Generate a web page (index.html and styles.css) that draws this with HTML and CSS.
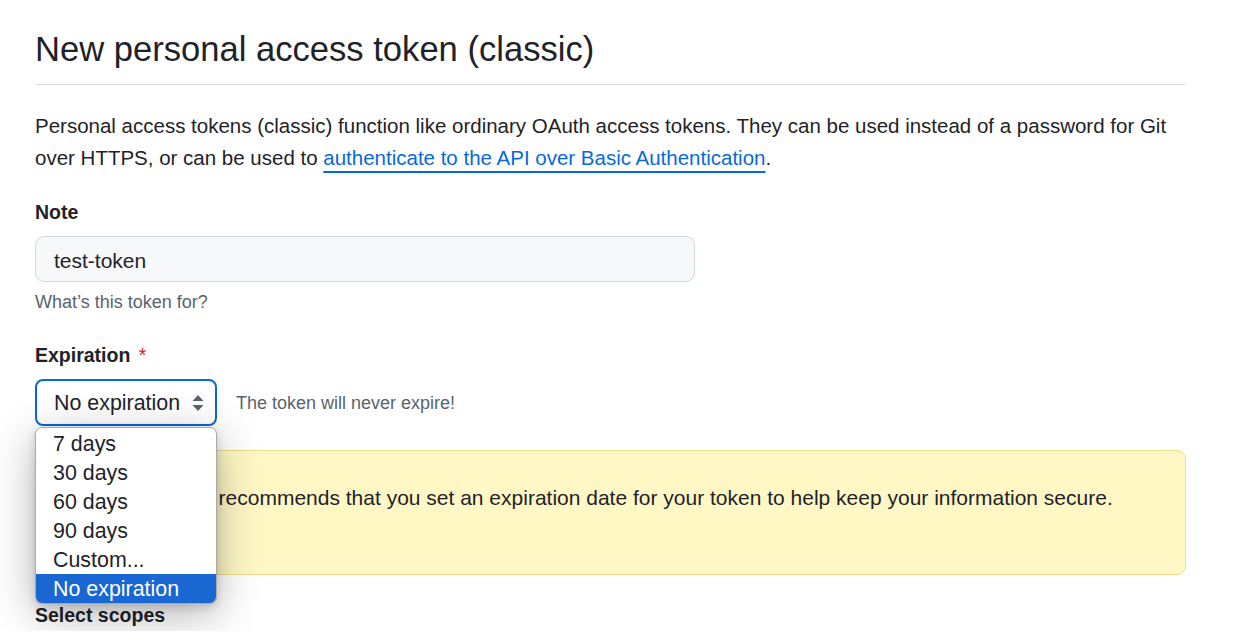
FILE: index.html
```html
<!DOCTYPE html>
<html lang="en">
<head>
<meta charset="utf-8">
<title>New personal access token (classic)</title>
<link rel="stylesheet" href="styles.css">
</head>
<body>
<main class="page">
  <div class="subhead">
    <h2 class="subhead-heading">New personal access token (classic)</h2>
  </div>
  <p class="intro">Personal access tokens (classic) function like ordinary OAuth access tokens. They can be used instead of a password for Git over HTTPS, or can be used to <a class="link" href="#">authenticate to the API over Basic Authentication</a>.</p>

  <div class="form-group">
    <label class="label">Note</label>
    <div class="input">test-token</div>
    <p class="note">What’s this token for?</p>
  </div>

  <div class="form-group expiration">
    <label class="label">Expiration <span class="req">*</span></label>
    <div class="select-row">
      <div class="select-wrap">
        <div class="select">
          <span>No expiration</span>
          <svg class="select-arrows" width="12" height="18" viewBox="0 0 12 18" aria-hidden="true">
            <path d="M6 1 L11.5 7 L0.5 7 Z" fill="#59636e"/>
            <path d="M6 17 L11.5 11 L0.5 11 Z" fill="#59636e"/>
          </svg>
        </div>
        <ul class="dropdown">
          <li>7 days</li>
          <li>30 days</li>
          <li>60 days</li>
          <li>90 days</li>
          <li>Custom...</li>
          <li class="selected">No expiration</li>
        </ul>
      </div>
      <span class="select-hint">The token will never expire!</span>
    </div>
  </div>

  <div class="flash-warn">
    <span class="flash-text">GitHub strongly recommends that you set an expiration date for your token to help keep your information secure.</span>
  </div>

  <h3 class="scopes">Select scopes</h3>
</main>
</body>
</html>
```

FILE: styles.css
```css
* { box-sizing: border-box; }

html, body {
  margin: 0;
  padding: 0;
  background: #ffffff;
}

body {
  font-family: "Liberation Sans", Arial, sans-serif;
  font-size: 20.5px;
  line-height: 32px;
  color: #1f2328;
  overflow: hidden;
}

.page {
  width: 1151px;
  margin-left: 35px;
}

.subhead {
  padding-top: 27px;
  padding-bottom: 13px;
  border-bottom: 1px solid #d8dee4;
}

.subhead-heading {
  margin: 0;
  font-size: 34.6px;
  line-height: 44px;
  font-weight: 400;
}

.intro {
  margin: 25px 0 22px;
}

.link {
  color: #0969da;
  text-decoration: underline;
  text-decoration-thickness: 2px;
  text-underline-offset: 6px;
}

.label {
  display: block;
  font-size: 19.5px;
  font-weight: 700;
  line-height: 32px;
}

.req {
  color: #d1242f;
  font-weight: 400;
  margin-left: 3px;
}

.input {
  margin-top: 8px;
  width: 660px;
  height: 46px;
  padding: 3px 18px 0;
  display: flex;
  align-items: center;
  font-size: 21px;
  background: #f6f8fa;
  border: 1px solid #d1d9e0;
  border-radius: 9px;
}

.note {
  margin: 8px 0 0;
  font-size: 18px;
  line-height: 24px;
  color: #59636e;
}

.expiration {
  margin-top: 25px;
}

.select-row {
  margin-top: 8px;
  display: flex;
  align-items: center;
}

.select-wrap {
  position: relative;
}

.select {
  width: 182px;
  height: 47px;
  padding: 0 11px 0 17px;
  display: flex;
  align-items: center;
  justify-content: space-between;
  font-size: 21.4px;
  border: 2px solid #0969da;
  border-radius: 8px;
  background: #ffffff;
}

.select-arrows {
  display: block;
}

.select-hint {
  margin-left: 19px;
  font-size: 18px;
  color: #59636e;
}

.dropdown {
  position: absolute;
  z-index: 10;
  top: 48px;
  left: 0;
  width: 182px;
  margin: 0;
  padding: 1px 0 0;
  list-style: none;
  font-size: 21.4px;
  background: #ffffff;
  border: 1px solid #a9a9a9;
  border-radius: 7px;
  overflow: hidden;
  box-shadow: 0 10px 44px rgba(0, 0, 0, 0.3), 0 3px 8px rgba(0, 0, 0, 0.14);
}

.dropdown li {
  height: 29px;
  line-height: 27px;
  padding: 2px 0 0 17px;
  white-space: nowrap;
}

.dropdown li.selected {
  background: #1967d2;
  color: #ffffff;
}

.flash-warn {
  margin-top: 24px;
  height: 125px;
  padding: 31px 24px 0 32px;
  font-size: 21px;
  background: #fff8c5;
  border: 1px solid #efd98a;
  border-radius: 9px;
}

.scopes {
  margin: 24px 0 0;
  font-size: 19.5px;
  line-height: 32px;
  font-weight: 700;
}
```
